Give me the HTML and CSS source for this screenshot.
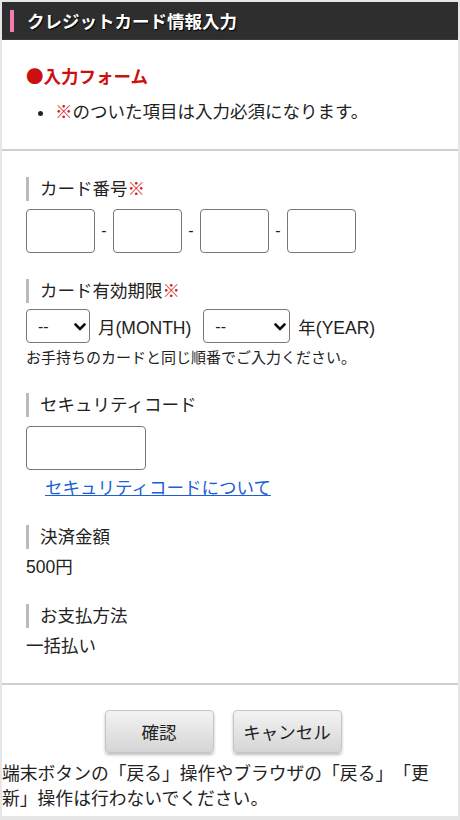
FILE: index.html
```html
<!DOCTYPE html>
<html lang="ja">
<head>
<meta charset="utf-8">
<title>クレジットカード情報入力</title>
<link rel="stylesheet" href="styles.css">
</head>
<body>
<div class="frame">
  <header class="head"><span class="head-bar"></span><h1 class="head-title">クレジットカード情報入力</h1></header>
  <section class="intro">
    <h2 class="intro-title">●入力フォーム</h2>
    <ul class="intro-list">
      <li><span class="req">※</span>のついた項目は入力必須になります。</li>
    </ul>
  </section>
  <section class="form">
    <div class="label">カード番号<span class="req">※</span></div>
    <div class="card-row">
      <input class="box card" type="text">
      <span class="dash">-</span>
      <input class="box card" type="text">
      <span class="dash">-</span>
      <input class="box card" type="text">
      <span class="dash">-</span>
      <input class="box card" type="text">
    </div>

    <div class="label gap">カード有効期限<span class="req">※</span></div>
    <div class="exp-row">
      <select class="sel sel-m"><option>--</option></select>
      <span class="exp-txt exp-m">月(MONTH)</span>
      <select class="sel sel-y"><option>--</option></select>
      <span class="exp-txt">年(YEAR)</span>
    </div>
    <p class="note">お手持ちのカードと同じ順番でご入力ください。</p>

    <div class="label gap2">セキュリティコード</div>
    <input class="box sec" type="text">
    <a class="link" href="#">セキュリティコードについて</a>

    <div class="label gap3">決済金額</div>
    <div class="value">500円</div>

    <div class="label gap3">お支払方法</div>
    <div class="value">一括払い</div>
  </section>
  <div class="actions">
    <button class="btn" type="button">確認</button>
    <button class="btn" type="button">キャンセル</button>
  </div>
  <p class="warn">端末ボタンの「戻る」操作やブラウザの「戻る」「更新」操作は行わないでください。</p>
</div>
</body>
</html>
```
FILE: styles.css
```css
* { box-sizing: border-box; }
html, body { margin: 0; padding: 0; background: #fff; }
body {
  font-family: "Liberation Sans", "Noto Sans CJK JP", sans-serif;
  color: #222;
  font-size: 17.5px;
  text-spacing-trim: space-all;
}
.frame {
  width: 460px;
  height: 820px;
  border: 2px solid #e6e6e6;
  border-bottom-width: 4px;
  overflow: hidden;
}
.head {
  height: 38px;
  background: #2e2e2e;
  border-bottom: 1px solid #3a3a3a;
  display: flex;
  align-items: center;
  padding-left: 8px;
}
.head-bar {
  width: 4px;
  height: 22px;
  background: #f07eb4;
  margin-right: 13px;
}
.head-title {
  margin: 0;
  color: #fff;
  font-family: "Noto Sans CJK JP", sans-serif;
  font-size: 17.5px;
  font-weight: bold;
  line-height: 24px;
  text-shadow: 1px 1px 1px #000;
}
.intro {
  padding: 24px 24px 25px;
  border-bottom: 2px solid #cfcfcf;
}
.intro-title {
  margin: 0;
  color: #cc1010;
  font-family: "Noto Sans CJK JP", sans-serif;
  font-size: 17.5px;
  font-weight: bold;
  line-height: 24px;
}
.intro-list {
  margin: 12px 0 0;
  padding-left: 29px;
  line-height: 24px;
}
.req { color: #d81818; }
.form {
  padding: 26px 24px 25px;
  border-bottom: 2px solid #cfcfcf;
}
.label {
  border-left: 3px solid #bbb;
  padding-left: 11px;
  line-height: 24px;
  height: 24px;
}
.gap { margin-top: 26px; }
.gap2 { margin-top: 25px; }
.gap3 { margin-top: 25px; }
.box {
  display: block;
  border: 1px solid #777;
  border-radius: 4px;
  background: #fff;
  margin: 0;
  padding: 0;
}
.card-row {
  display: flex;
  align-items: center;
  margin-top: 8px;
}
.card { width: 69px; height: 44px; }
.dash {
  width: 18px;
  text-align: center;
  font-size: 16px;
}
.exp-row {
  display: flex;
  align-items: center;
  margin-top: 6px;
  height: 34px;
}
.sel {
  -webkit-appearance: none;
  appearance: none;
  height: 34px;
  border: 1px solid #777;
  border-radius: 4px;
  background: #fff url("data:image/svg+xml,%3Csvg xmlns='http://www.w3.org/2000/svg' width='12' height='8' viewBox='0 0 12 8'%3E%3Cpath d='M1.5 1.5 6 6 10.5 1.5' fill='none' stroke='%23111' stroke-width='2.6' stroke-linecap='round' stroke-linejoin='round'/%3E%3C/svg%3E") no-repeat;
  font-family: "Liberation Sans", "Noto Sans", sans-serif;
  font-size: 16px;
  color: #222;
  padding: 0 0 0 11px;
  margin: 0;
}
.sel-m { width: 64px; background-position: 47px 13px; }
.sel-y { width: 87px; background-position: 70px 13px; }
.exp-txt {
  margin: 0 0 0 8px;
}
.exp-m { margin-right: 12px; }
.note {
  margin: 5px 0 0;
  font-size: 15px;
  line-height: 20px;
}
.sec { width: 120px; height: 44px; margin-top: 9px; }
.link {
  display: inline-block;
  margin: 6px 0 0 19px;
  color: #1c5fd6;
  text-decoration: underline;
  line-height: 24px;
}
.value {
  margin-top: 6px;
  line-height: 24px;
}
.actions {
  display: flex;
  justify-content: center;
  gap: 19px;
  padding: 25px 14px 0 0;
}
.btn {
  width: 109px;
  height: 43px;
  border: 1px solid #c6c6c6;
  border-radius: 4px;
  background: linear-gradient(#f3f3f3, #d5d5d5);
  box-shadow: 0 2px 3px rgba(0,0,0,0.25);
  font-family: "Noto Sans CJK JP", sans-serif;
  font-size: 17.5px;
  color: #222;
  padding: 0;
}
.warn {
  margin: 9px 0 0;
  font-size: 17.8px;
  line-height: 25px;
}
```
